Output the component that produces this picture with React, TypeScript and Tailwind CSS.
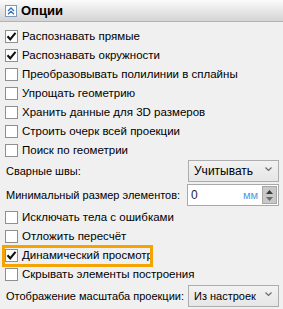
import React from "react";

const font = { fontFamily: '"Liberation Sans", Arial, sans-serif' };

function Check({ checked }: { checked?: boolean }) {
  return (
    <div className="w-[13px] h-[13px] border border-[#8e8f8f] bg-white flex items-center justify-center shrink-0">
      {checked && (
        <svg width="11" height="11" viewBox="0 0 11 11">
          <path d="M1.5 5.3 L4.2 8.3 L9.5 1.8" fill="none" stroke="#111" strokeWidth="2.1" />
        </svg>
      )}
    </div>
  );
}

function Row({ label, checked }: { label: string; checked?: boolean }) {
  return (
    <div className="h-[19px] flex items-center pl-[5px] gap-[4px]">
      <Check checked={checked} />
      <span className="text-[11.5px] text-black whitespace-nowrap leading-none">{label}</span>
    </div>
  );
}

function Chevron() {
  return (
    <svg width="7" height="5" viewBox="0 0 7 5">
      <path d="M0.5 0.5 L3.5 3.5 L6.5 0.5" fill="none" stroke="#6a6a6a" strokeWidth="1.2" />
    </svg>
  );
}

function Combo({ value, small }: { value: string; small?: boolean }) {
  return (
    <div className="w-[91px] h-[22px] border border-[#adadad] bg-gradient-to-b from-[#f2f2f2] to-[#e6e6e6] flex items-center pl-[5px] pr-[12px] relative">
      <span className={small ? "text-[11px] text-black whitespace-nowrap flex-1 leading-none" : "text-[12px] text-black whitespace-nowrap flex-1 leading-none"}>{value}</span>
      <div className="absolute right-[6px] top-[6px]">
        <Chevron />
      </div>
    </div>
  );
}

export default function App() {
  return (
    <div className="w-[283px] h-[309px] bg-[#f0f0f0] overflow-hidden" style={font}>
      <div className="h-[22px] border-b border-[#b4b4b4] bg-gradient-to-b from-[#fbfbfb] to-[#d4d4d4] flex items-center pl-[5px] gap-[4px]">
        <div className="w-[12px] h-[12px] border border-[#7d9ab8] bg-white flex items-center justify-center">
          <svg width="8" height="8" viewBox="0 0 8 8">
            <path d="M1 4 L4 1 L7 4 M1 7.3 L4 4.3 L7 7.3" fill="none" stroke="#2b6fc8" strokeWidth="1.3" />
          </svg>
        </div>
        <span className="text-[13px] font-bold text-black leading-none">Опции</span>
      </div>
      <div className="pt-[5px]">
        <Row label="Распознавать прямые" checked />
        <Row label="Распознавать окружности" checked />
        <Row label="Преобразовывать полилинии в сплайны" />
        <Row label="Упрощать геометрию" />
        <Row label="Хранить данные для 3D размеров" />
        <Row label="Строить очерк всей проекции" />
        <Row label="Поиск по геометрии" />
        <div className="h-[22px] flex items-center justify-between pl-[6px] pr-[4px]">
          <span className="text-[11px] text-black leading-none">Сварные швы:</span>
          <Combo value="Учитывать" />
        </div>
        <div className="mt-[2px] h-[22px] flex items-center justify-between pl-[6px] pr-[4px]">
          <span className="text-[11px] text-black leading-none whitespace-nowrap">Минимальный размер элементов:</span>
          <div className="w-[92px] h-[22px] border border-[#a9a9a9] bg-white flex items-center pl-[3px] pr-[1px]">
            <span className="text-[12px] text-[#1a1a40] flex-1 leading-none">0</span>
            <span className="text-[11px] text-[#4a9be8] mr-[4px] leading-none">мм</span>
            <div className="w-[15px] h-[18px] bg-[#c8c8c8] border border-[#a8a8a8] flex flex-col items-center justify-center gap-[3px]">
              <svg width="7" height="4" viewBox="0 0 7 4">
                <path d="M0 4 L3.5 0 L7 4 Z" fill="#3a3a3a" />
              </svg>
              <svg width="7" height="4" viewBox="0 0 7 4">
                <path d="M0 0 L3.5 4 L7 0 Z" fill="#6a6a6a" />
              </svg>
            </div>
          </div>
        </div>
        <div className="mt-[2px]">
          <Row label="Исключать тела с ошибками" />
          <Row label="Отложить пересчёт" />
          <div className="relative">
            <Row label="Динамический просмотр" checked />
            <div className="absolute left-[2px] top-[-1px] w-[151px] h-[22px] border-[3px] border-[#f5a300] pointer-events-none" />
          </div>
          <Row label="Скрывать элементы построения" />
        </div>
        <div className="mt-[1px] h-[22px] flex items-center justify-between pl-[6px] pr-[4px]">
          <span className="text-[11px] text-black leading-none whitespace-nowrap">Отображение масштаба проекции:</span>
          <Combo value="Из настроек" small />
        </div>
      </div>
    </div>
  );
}
